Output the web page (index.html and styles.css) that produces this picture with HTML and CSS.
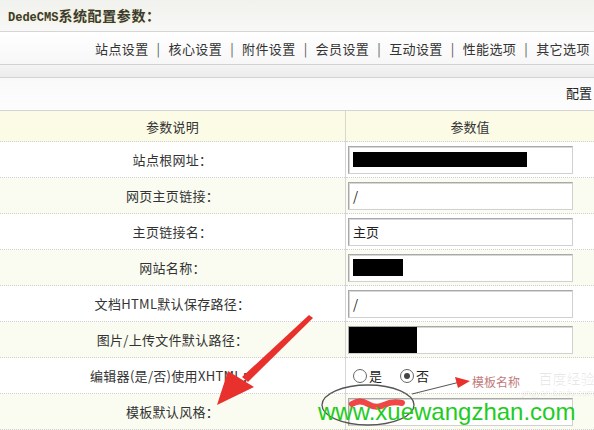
FILE: index.html
```html
<!DOCTYPE html>
<html lang="zh-CN">
<head>
    <meta charset="UTF-8">
    <meta name="viewport" content="width=device-width, initial-scale=1.0">
    <title>DedeCMS系统配置参数</title>
    <link rel="stylesheet" href="styles.css">
</head>
<body>
    <div class="page">
        <div class="title"><span class="brand">DedeCMS</span>系统配置参数：</div>

        <div class="tabs">
            <a>站点设置</a><i>|</i><a>核心设置</a><i>|</i><a>附件设置</a><i>|</i><a>会员设置</a><i>|</i><a>互动设置</a><i>|</i><a>性能选项</a><i>|</i><a>其它选项</a>
        </div>
        <div class="band"></div>
        <div class="bar">配置</div>

        <table class="params">
            <tr class="head">
                <td class="name">参数说明</td>
                <td class="value">参数值</td>
            </tr>
            <tr>
                <td class="name">站点根网址：</td>
                <td class="value"><div class="field"><span class="redact" style="width:174px"></span></div></td>
            </tr>
            <tr class="alt">
                <td class="name">网页主页链接：</td>
                <td class="value"><div class="field">/</div></td>
            </tr>
            <tr>
                <td class="name">主页链接名：</td>
                <td class="value"><div class="field">主页</div></td>
            </tr>
            <tr class="alt">
                <td class="name">网站名称：</td>
                <td class="value"><div class="field"><span class="redact tall" style="width:50px"></span></div></td>
            </tr>
            <tr>
                <td class="name">文档HTML默认保存路径：</td>
                <td class="value"><div class="field">/</div></td>
            </tr>
            <tr class="alt">
                <td class="name">图片/上传文件默认路径：</td>
                <td class="value"><div class="field flush"><span class="redact full" style="width:68px"></span></div></td>
            </tr>
            <tr>
                <td class="name">编辑器(是/否)使用XHTML：</td>
                <td class="value">
                    <div class="radios">
                        <span class="radio"></span>是
                        <span class="radio on"></span>否
                    </div>
                </td>
            </tr>
            <tr class="alt">
                <td class="name">模板默认风格：</td>
                <td class="value"><div class="field"></div></td>
            </tr>
        </table>

        <div class="bd-mark">
            <span class="bd-title">百度经验</span>
            <span class="bd-url">jingyan.baidu.com</span>
        </div>

        <svg class="marks" width="594" height="430" viewBox="0 0 594 430">
            <!-- big arrow pointing at the label -->
            <polygon points="309,315 313,318 248,382 242,377" fill="#e8302c"/>
            <polygon points="228,371 217,405 254,387" fill="#e8302c"/>
            <!-- ellipse round the input -->
            <ellipse cx="368" cy="405" rx="46" ry="20" fill="none" stroke="#555" stroke-width="1.3"/>
            <path d="M352 404 q8 -5 16 0 t16 1 t18 -2" fill="none" stroke="#f02424" stroke-width="6" stroke-linecap="round" opacity="0.85"/>
            <!-- small pointer to the note -->
            <line x1="412" y1="394" x2="460" y2="382" stroke="#555" stroke-width="1"/>
            <polygon points="455,377 470,381 458,388" fill="#e8302c"/>
        </svg>
        <div class="note">模板名称</div>

        <div class="site-mark">www.xuewangzhan.com</div>
    </div>
</body>
</html>
```

FILE: styles.css
```css
html, body {
    margin: 0;
    padding: 0;
    background: #fff;
}
body {
    font-family: "Noto Sans CJK SC", "DejaVu Sans", sans-serif;
    font-size: 13px;
    color: #333;
}
.page {
    position: relative;
    width: 594px;
    height: 430px;
    overflow: hidden;
}
.title {
    height: 31px;
    line-height: 30px;
    padding-left: 8px;
    font-weight: bold;
    font-size: 14px;
    letter-spacing: 0.6px;
    color: #3a3a3a;
    background: linear-gradient(#f1f1ee, #f8f8f6);
    border-bottom: 1px solid #d6d6d6;
    text-shadow: 0 0 2px #f3ef9a;
    white-space: nowrap;
}
.brand {
    font-family: "Liberation Mono", monospace;
    font-size: 12px;
    letter-spacing: 0;
}
.tabs {
    display: flex;
    align-items: center;
    gap: 8px;
    height: 32px;
    padding-left: 95px;
    background: linear-gradient(#fff, #f7f7f7);
    border-bottom: 1px solid #d2d2d2;
    white-space: nowrap;
    letter-spacing: 0.4px;
}
.tabs a {
    color: #333;
}
.tabs i {
    font-style: normal;
    color: #555;
}
.band {
    height: 12px;
    background: linear-gradient(#f4f4f4, #ececec);
    border-bottom: 1px solid #d4d4d4;
}
.bar {
    height: 32px;
    line-height: 30px;
    padding-left: 566px;
    background: linear-gradient(#f9f9f9, #fdfdfd);
    border-bottom: 1px solid #d4d4d4;
    white-space: nowrap;
    color: #222;
}
.params {
    width: 594px;
    border-collapse: collapse;
    table-layout: fixed;
}
.params td {
    height: 35px;
    padding: 0;
    border-bottom: 1px dotted #cfcfcf;
    vertical-align: middle;
}
.params td.name {
    width: 345px;
    text-align: center;
    border-right: 1px solid #d6d6d6;
    letter-spacing: 0.3px;
}
.params .head td {
    height: 30px;
    background: #fbfbe6;
    text-align: center;
}
.params tr.alt td {
    background: #fafcf1;
}
.field {
    display: flex;
    align-items: center;
    box-sizing: border-box;
    width: 225px;
    height: 28px;
    margin-left: 2px;
    padding: 0 4px;
    background: #fff;
    border: 1px solid #a8a8a8;
    border-bottom-color: #d0d0d0;
    border-right-color: #d0d0d0;
    box-shadow: inset 1px 1px 0 #d8d8d8;
    font-size: 13px;
    color: #222;
}
.field.flush {
    padding: 0;
}
.redact {
    display: block;
    height: 15px;
    background: #000;
}
.redact.tall {
    height: 17px;
}
.redact.full {
    height: 26px;
}
.radios {
    display: flex;
    align-items: center;
    padding-left: 7px;
    font-size: 13px;
    color: #222;
}
.radio {
    width: 12px;
    height: 12px;
    margin-right: 2px;
    border: 1px solid #666;
    border-radius: 50%;
    background: #fff;
    position: relative;
}
.radio.on {
    margin-left: 18px;
}
.radio.on::after {
    content: "";
    position: absolute;
    left: 3px;
    top: 3px;
    width: 6px;
    height: 6px;
    border-radius: 50%;
    background: #444;
}
.marks {
    position: absolute;
    left: 0;
    top: 0;
    pointer-events: none;
}
.note {
    position: absolute;
    left: 472px;
    top: 373px;
    font-size: 12px;
    color: #b35a5a;
    opacity: 0.8;
    white-space: nowrap;
}
.bd-mark {
    position: absolute;
    left: 522px;
    top: 368px;
    display: flex;
    flex-direction: column;
    align-items: flex-end;
    color: rgba(0, 0, 0, 0.09);
    white-space: nowrap;
}
.bd-title {
    font-size: 14px;
}
.bd-url {
    font-family: "Liberation Sans", sans-serif;
    font-size: 9px;
}
.site-mark {
    position: absolute;
    left: 318px;
    top: 400px;
    font-family: "Liberation Sans", Arial, sans-serif;
    font-size: 24px;
    line-height: 24px;
    color: #1fcc1f;
    white-space: nowrap;
}
```
